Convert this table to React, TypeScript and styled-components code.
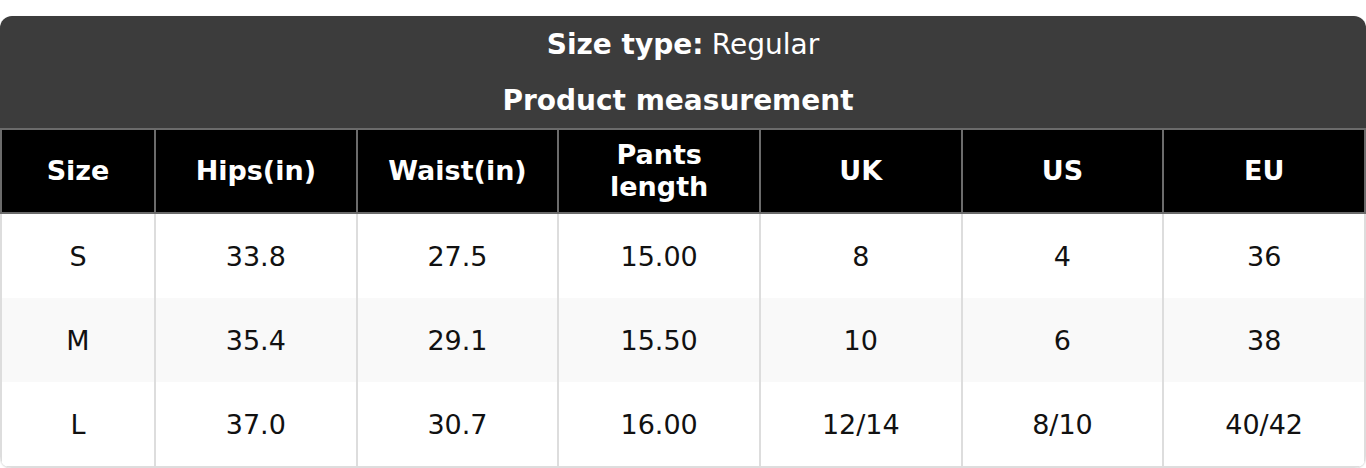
import React from 'react';
import styled, { createGlobalStyle } from 'styled-components';

interface SizeRow {
  size: string;
  hips: string;
  waist: string;
  length: string;
  uk: string;
  us: string;
  eu: string;
}

const rows: SizeRow[] = [
  { size: 'S', hips: '33.8', waist: '27.5', length: '15.00', uk: '8', us: '4', eu: '36' },
  { size: 'M', hips: '35.4', waist: '29.1', length: '15.50', uk: '10', us: '6', eu: '38' },
  { size: 'L', hips: '37.0', waist: '30.7', length: '16.00', uk: '12/14', us: '8/10', eu: '40/42' },
];

const headers = ['Size', 'Hips(in)', 'Waist(in)', 'Pants length', 'UK', 'US', 'EU'];

const GlobalStyle = createGlobalStyle`
  html, body {
    margin: 0;
    padding: 0;
    background: #fff;
    font-family: "DejaVu Sans", "Noto Sans", sans-serif;
  }
`;

const Page = styled.div`
  padding-top: 16px;
`;

const Card = styled.div`
  border-radius: 12px;
  overflow: hidden;
  background: #fff;
  box-shadow: 0 1px 2px rgba(0, 0, 0, 0.18);
`;

const Caption = styled.div`
  background: #3c3c3c;
  color: #fff;
  display: flex;
  flex-direction: column;
`;

const CaptionLine = styled.div<{ $bold?: boolean }>`
  height: 56px;
  display: flex;
  align-items: center;
  justify-content: center;
  font-size: 28px;
  font-weight: ${(p) => (p.$bold ? 700 : 400)};
  padding-right: ${(p) => (p.$bold ? '10px' : '0')};
`;

const Strong = styled.strong`
  font-weight: 700;
  margin-right: 0.3em;
`;

const Table = styled.table`
  width: 100%;
  border-collapse: collapse;
  table-layout: fixed;
`;

const Th = styled.th`
  background: #000;
  color: #fff;
  font-size: 27px;
  font-weight: 700;
  line-height: 32px;
  height: 82px;
  padding: 0 10px;
  border: 2px solid #6b6b6b;
  text-align: center;
  vertical-align: middle;
`;

const Tr = styled.tr<{ $striped?: boolean }>`
  background: ${(p) => (p.$striped ? '#f9f9f9' : '#fff')};

  &:last-child td {
    border-bottom: 2px solid #ddd;
  }
`;

const Td = styled.td`
  font-size: 27px;
  color: #111;
  height: 84px;
  padding: 0 10px;
  border-left: 2px solid #ddd;
  border-right: 2px solid #ddd;
  text-align: center;
  vertical-align: middle;
`;

const App: React.FC = () => (
  <Page>
    <GlobalStyle />
    <Card>
      <Caption>
        <CaptionLine>
          <Strong>Size type:</Strong>Regular
        </CaptionLine>
        <CaptionLine $bold>Product measurement</CaptionLine>
      </Caption>
      <Table>
        <colgroup>
          <col style={{ width: 154 }} />
          <col />
          <col />
          <col />
          <col />
          <col />
          <col />
        </colgroup>
        <thead>
          <tr>
            {headers.map((h) => (
              <Th key={h}>{h}</Th>
            ))}
          </tr>
        </thead>
        <tbody>
          {rows.map((r, i) => (
            <Tr key={r.size} $striped={i % 2 === 1}>
              <Td>{r.size}</Td>
              <Td>{r.hips}</Td>
              <Td>{r.waist}</Td>
              <Td>{r.length}</Td>
              <Td>{r.uk}</Td>
              <Td>{r.us}</Td>
              <Td>{r.eu}</Td>
            </Tr>
          ))}
        </tbody>
      </Table>
    </Card>
  </Page>
);

export default App;
